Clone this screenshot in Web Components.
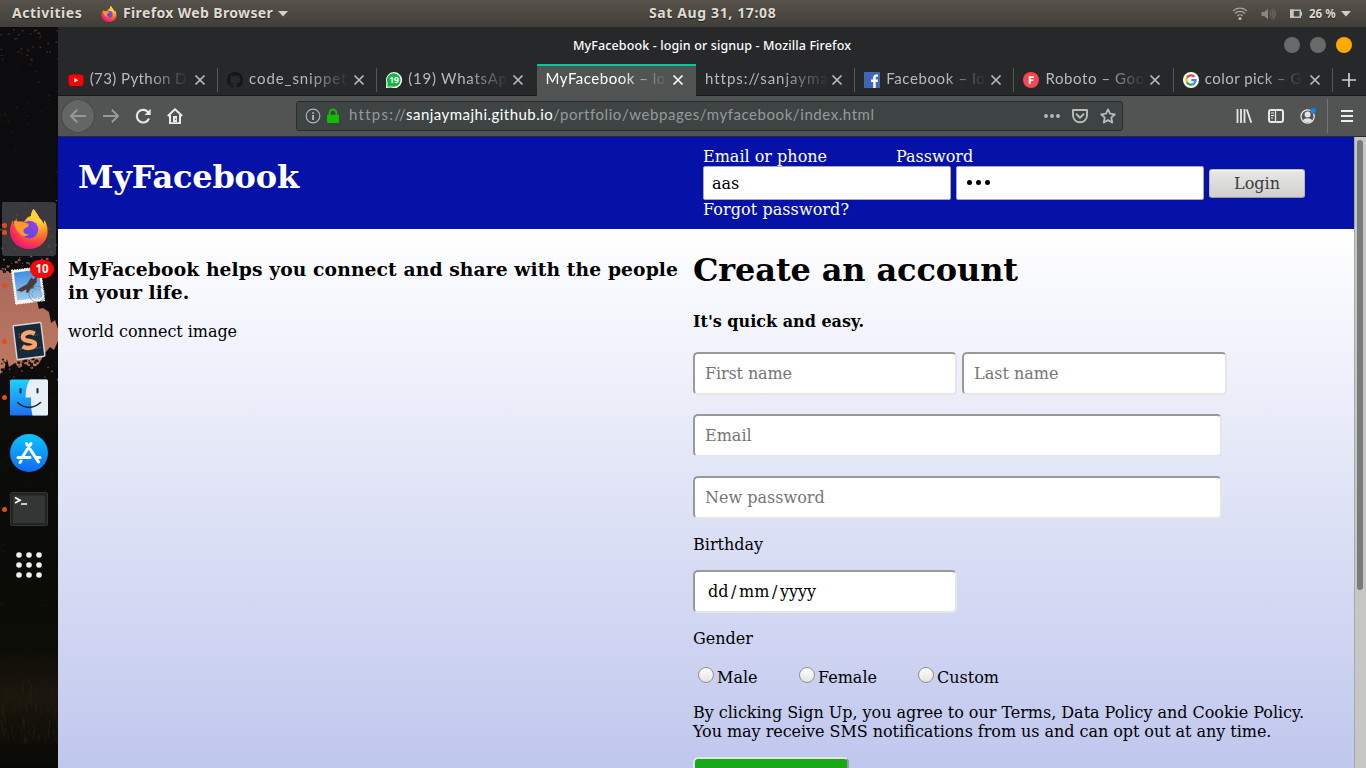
<!DOCTYPE html>
<html lang="en">
<head>
<meta charset="utf-8">
<title>MyFacebook - login or signup</title>
<style>
html,body{margin:0;height:100%;overflow:hidden;background:#000}
</style>
</head>
<body>
<desk-top></desk-top>
<script>
const define = (name, html, after) => customElements.define(name, class extends HTMLElement {
  connectedCallback() {
    if (this.shadowRoot) return;
    const root = this.attachShadow({ mode: 'open' });
    root.innerHTML = typeof html === 'function' ? html(this) : html;
    if (after) after(this, root);
  }
});

/* One line of text spaced out to a given width */
define('fit-text', '<style>:host{display:block;white-space:pre;flex:none}span{display:inline-block}</style><span><slot></slot></span>', (el, root) => {
  const w = parseFloat(el.getAttribute('w'));
  if (!w) return;
  const span = root.querySelector('span');
  el.style.width = w + 'px';
  const diff = w - span.getBoundingClientRect().width;
  if (Math.abs(diff) > 1) span.style.letterSpacing = diff / (el.textContent.length - .5) + 'px';
});

const fox = `<defs><radialGradient id="a" cx=".75" cy=".1" r="1"><stop offset="0" stop-color="#fff44f"/><stop offset=".35" stop-color="#ffb72c"/><stop offset=".6" stop-color="#ff6a2e"/><stop offset=".85" stop-color="#f9295c"/><stop offset="1" stop-color="#e0158e"/></radialGradient><linearGradient id="b" x1="1" y1="0" x2="0" y2="1"><stop offset="0" stop-color="#a03cf0"/><stop offset="1" stop-color="#4b4fd8"/></linearGradient></defs>
<path fill="url(#a)" d="M24.500 0C27 3 29 6 30.500 9C33 11 34 13 34.500 15L35.500 11C38 15 39 20 38.500 25C37 34 29 40 20 40C9 40 1 32 1 22C1 18 2 14 4 11L4.500 15L7.500 9L8 13C11 12 13 12 15 13C17 9 20 7 22 7C22 4 23 2 24.500 0Z"/>
<circle cx="20.500" cy="20.500" r="8.800" fill="url(#b)"/><path fill="#ff9a2a" d="M5 12C10 12 13 14 16 14C19 14 20 15 19.500 17C18 19 15 19 14.500 21C14 24 17 26 20 25C18 28 13 28 10 24C7 20 5 17 5 12Z"/><path fill="#ffd33d" d="M24.500 0C28 5 32 10 33 17C30 12 27 11 22 10C22 5 23 2 24.500 0Z"/>`;
const ICONS = {
  fox: ['0 0 40 40', fox],
  youtube: ['0 0 16 16', '<rect x=".5" y="2.500" width="15" height="11.500" rx="3" fill="#f00"/><path d="M6.200 5.900v4.600l4.200-2.300z" fill="#fff"/>'],
  github: ['0 0 16 16', '<path fill="#151617" d="M8 0C3.580 0 0 3.580 0 8c0 3.540 2.290 6.530 5.470 7.590.4.070.55-.17.55-.38 0-.19-.01-.82-.01-1.490-2.010.37-2.530-.49-2.690-.94-.09-.23-.48-.94-.82-1.130-.28-.15-.68-.52-.01-.53.63-.01 1.080.58 1.230.82.72 1.210 1.870.87 2.330.66.07-.52.28-.87.51-1.070-1.780-.2-3.640-.89-3.640-3.950 0-.87.31-1.590.82-2.150-.08-.2-.36-1.020.08-2.120 0 0 .67-.21 2.200.82a7.500 7.500 0 014 0c1.530-1.040 2.200-.82 2.200-.82.44 1.100.16 1.920.08 2.120.51.56.82 1.270.82 2.150 0 3.070-1.870 3.750-3.650 3.950.29.25.54.73.54 1.480 0 1.070-.01 1.930-.01 2.200 0 .21.15.46.55.38A8 8 0 0016 8c0-4.420-3.580-8-8-8z"/>'],
  whatsapp: ['0 0 16 16', '<path d="M0 16L.3 10A8 8 0 1 1 5 15.500z" fill="#fff"/><path d="M1.300 14.700L1.500 10.500A6.800 6.800 0 1 1 5.500 14.400z" fill="#12b83f"/><text x="8.100" y="11" font-family="Open Sans,sans-serif" font-size="8.500" font-weight="700" text-anchor="middle" fill="#fff">19</text>'],
  facebook: ['0 0 16 16', '<path fill="#4267b2" d="M0 0h16v16H0z"/><path fill="#fff" d="M9.200 16V9.900H7.100V7.500h2.100V5.700c0-2.100 1.300-3.200 3.100-3.200.9 0 1.600.1 1.800.1v2.200h-1.200c-1 0-1.200.5-1.200 1.200v1.500h2.300l-.3 2.400h-2V16z"/>'],
  fonts: ['0 0 16 16', '<circle cx="8" cy="8" r="8" fill="#f8484d"/><path fill="#fff" d="M5.800 4.200h5v1.700h-3v1.500h2.700V9H7.800v3h-2z"/>'],
  google: ['0 0 16 16', '<circle cx="8" cy="8" r="8" fill="#fff"/><g fill="none" stroke-width="2.300"><path stroke="#ea4335" d="M3.900 5.800A4.700 4.700 0 0 1 11.400 4.800"/><path stroke="#fbbc05" d="M3.900 5.800A4.700 4.700 0 0 0 3.900 10.300"/><path stroke="#34a853" d="M3.900 10.200A4.700 4.700 0 0 0 11 11.600"/><path stroke="#4285f4" d="M8.200 8.100H12.600A4.700 4.700 0 0 1 11 11.600"/></g>'],
  close: ['0 0 16 16', '<path d="M3.500 3.500l9 9m0-9l-9 9" stroke="currentColor" stroke-width="1.700" fill="none"/>'],
  plus: ['0 0 16 16', '<path d="M8 1v14M1 8h14" stroke="#cfcfcf" stroke-width="1.700"/>'],
  back: ['0 0 16 16', '<path d="M7.200 1.700L1 8l6.200 6.300M1 8h15" fill="none" stroke="#969998" stroke-width="2"/>'],
  forward: ['0 0 16 16', '<path d="M8.800 1.700L15 8l-6.200 6.300M15 8H0" fill="none" stroke="#969998" stroke-width="2"/>'],
  reload: ['0 0 16 16', '<path d="M13.500 4.800A6.300 6.300 0 1 0 14 10.500" fill="none" stroke="#e8e8e8" stroke-width="2.100"/><path d="M15.700 .8V7H9.500z" fill="#e8e8e8"/>'],
  home: ['0 0 16 16', '<path d="M.8 8L8 1.300 15.200 8" fill="none" stroke="#eaeaea" stroke-width="2" stroke-linejoin="round"/><path d="M3 7v8.200h10V7" fill="none" stroke="#eaeaea" stroke-width="2"/><path d="M6 8h4v6H6z" fill="#eaeaea"/><path d="M8.300 10.500h.8v1.500h-.8z" fill="#444"/>'],
  info: ['0 0 16 16', '<circle cx="8" cy="8" r="6.800" fill="none" stroke="#aeb2b1" stroke-width="1.200"/><path d="M7.200 7h1.800v5H7.200zM7.200 4.200h1.800v1.600H7.200z" fill="#b6b9b8"/>'],
  lock: ['0 0 16 16', '<path d="M4.600 8V5a3.400 3.400 0 0 1 6.800 0v3" fill="none" stroke="#12bc00" stroke-width="2"/><rect x="2" y="6.800" width="12" height="8.200" rx="1.200" fill="#12bc00"/>'],
  dots: ['0 0 16 16', '<g fill="#b9bcbb"><circle cx="2" cy="8" r="1.900"/><circle cx="8" cy="8" r="1.900"/><circle cx="14" cy="8" r="1.900"/></g>'],
  pocket: ['0 0 16 16', '<path d="M1 2h14v5.500a7 6.800 0 0 1-14 0z" fill="none" stroke="#b9bcbb" stroke-width="1.900" stroke-linejoin="round"/><path d="M4.500 6.300L8 9.600l3.500-3.300" fill="none" stroke="#b9bcbb" stroke-width="1.900" stroke-linecap="round"/>'],
  star: ['0 0 16 16', '<path d="M8 1.400l2 4.300 4.800.6-3.500 3.300.9 4.900L8 12.100l-4.200 2.400.9-4.900L1.200 6.300 6 5.700z" fill="none" stroke="#b9bcbb" stroke-width="1.800" stroke-linejoin="round"/>'],
  library: ['0 0 16 16', '<path d="M1.500 1v14M5 1v14M8.500 1v14M10.800 1.500l4.500 13.300" fill="none" stroke="#e8e8e8" stroke-width="1.800"/>'],
  sidebar: ['0 0 16 16', '<rect x="1" y="2" width="14" height="12" rx="2" fill="none" stroke="#e8e8e8" stroke-width="2"/><path d="M7.500 2v12" stroke="#e8e8e8" stroke-width="1.300"/><path d="M3 5h3M3 7.500h3M3 10h2" stroke="#e8e8e8" stroke-width="1.100"/>'],
  account: ['0 0 16 16', '<circle cx="7.600" cy="8.500" r="6.600" fill="none" stroke="#e3e3e3" stroke-width="1.300"/><circle cx="7.600" cy="6.500" r="3" fill="#e3e3e3"/><path d="M3 12.500c1-3 8-3 9.200 0-2 2.400-7 2.400-9.200 0z" fill="#e3e3e3"/><circle cx="13.200" cy="2.700" r="3" fill="#515453"/><circle cx="13.200" cy="2.700" r="2.600" fill="#1086ff"/>'],
  menu: ['0 0 16 16', '<path d="M2 3h12M2 8h12M2 13h12" stroke="#ededed" stroke-width="2"/>'],
  caret: ['0 0 10 6', '<path d="M0 0h10L5 5.500z" fill="#d2cfc9"/>'],
  wifi: ['0 0 16 16', '<g fill="none" stroke="#aaa69f" stroke-width="1.200"><path d="M1 5a10 10 0 0 1 14 0M3 7.500a7 7 0 0 1 10 0M5.200 10a4 4 0 0 1 5.600 0"/></g><circle cx="8" cy="12.400" r="1.500" fill="#c3c0ba"/>'],
  sound: ['0 0 16 16', '<path d="M1.500 6h2.700L8 2.700v10.600L4.200 10H1.500z" fill="#8a877f"/><path d="M9.800 5.400a3.500 3.500 0 0 1 0 5.200M11.300 3.700a6 6 0 0 1 0 8.600M12.700 2.200a8 8 0 0 1 0 11.600" stroke="#77746d" fill="none"/>'],
  battery: ['0 0 16 16', '<rect x="2.700" y="4.200" width="9.600" height="7" fill="none" stroke="#c9c6c0" stroke-width="1.400"/><path d="M2 3.500h3.700v8.400H2zM12.500 5.700h1.500v4h-1.500z" fill="#c9c6c0"/>'],
  mail: ['0 0 40 40', '<defs><linearGradient id="m" x2="0" y2="1"><stop stop-color="#3f8fe0"/><stop offset="1" stop-color="#9ccbf1"/></linearGradient></defs><g transform="rotate(-7 19 20)"><rect x="4.500" y="3.500" width="29" height="34" fill="#f4f4ef" stroke="#fff" stroke-width="1.200" stroke-dasharray="1.500 1"/><rect x="6.500" y="6" width="25" height="28" fill="url(#m)"/><path d="M7 24l6-3 5-2 5-6 2 2 4-3-1 6-4 4 1 2-4 0-3 4-2-1 1-3-5 2z" fill="#4b3c37"/></g><circle cx="28" cy="29" r="8" fill="none" stroke="#69747b" stroke-opacity=".6"/><circle cx="28" cy="29" r="5" fill="none" stroke="#69747b" stroke-opacity=".5" stroke-dasharray="3 1"/>'],
  sublime: ['0 0 40 40', '<g transform="rotate(-7 20 20)"><rect x="6" y="3" width="28" height="34" rx="1" fill="#18293a" stroke="#d8d8d6" stroke-width="1.400"/><path d="M10 12h5m2 0h8m-15 3h4m12 0h4M10 27h3m13 1h5" stroke="#426487" stroke-dasharray="2 1"/><path d="M26.500 13.500c-5-4-12-2-12 2.500 0 5 11 3 11 7.500 0 4-8 4.500-12.500 1" fill="none" stroke="#ffa466" stroke-width="4.500"/></g>'],
  finder: ['0 0 40 40', '<defs><linearGradient id="f" x2="0" y2="1"><stop stop-color="#20d0ff"/><stop offset="1" stop-color="#1a70ef"/></linearGradient></defs><rect x="1" y="2.500" width="38" height="36" rx="1.500" fill="url(#f)"/><path d="M21 2.500h16.500a1.500 1.500 0 0 1 1.500 1.500v33a1.500 1.500 0 0 1-1.500 1.500H23.500C22.500 34 22 29 22 20.500h-5.500C17 12 18 7 21 2.500z" fill="#e9eff6"/><path d="M11.500 12v3.500M28.500 12v3.500" stroke="#20272f" stroke-width="2" stroke-linecap="round"/><path d="M8.500 25.500c7 6.500 16 6.500 23 0" fill="none" stroke="#20272f" stroke-width="1.600" stroke-linecap="round"/>'],
  store: ['0 0 40 40', '<defs><linearGradient id="s" x2="0" y2="1"><stop stop-color="#08c8fd"/><stop offset="1" stop-color="#1268f5"/></linearGradient></defs><circle cx="20" cy="20" r="19" fill="url(#s)"/><g fill="none" stroke="#fff" stroke-width="3" stroke-linecap="round"><path d="M22 10.500L13.500 24M17.500 10.500L29.500 29M9 24.500h12M26.500 24.500H31M12 28l-1 1.500"/></g>'],
  terminal: ['0 0 40 40', '<rect x="1.500" y="3.500" width="37" height="33" rx="1" fill="#222424" stroke="#343636"/><path d="M4 6.500h32V34H4z" fill="#343535"/><path d="M6 8.500l5 2.700-5 2.700M12 15h6" fill="none" stroke="#fff" stroke-width="1.700"/>'],
  apps: ['0 0 40 40', '<g fill="#f1f1f1">' + [10,20,30].map(y => [10,20,30].map(x => `<circle cx="${x}" cy="${y}" r="2.800"/>`).join('')).join('') + '</g>']
};
define('ui-icon', el => {
  const [box, body] = ICONS[el.getAttribute('name')];
  const w = el.getAttribute('size') || 16, h = el.getAttribute('h') || w;
  return `<style>:host{display:block;flex:none;width:${w}px;height:${h}px}svg{display:block}</style><svg width="${w}" height="${h}" viewBox="${box}">${body}</svg>`;
});

define('top-bar', `<style>
:host{display:grid;grid-template-columns:1fr auto 1fr;height:27px;box-sizing:border-box;align-items:center;background:linear-gradient(#57534b,#403e38);color:#dfdbd2;font:700 14px/26px "Noto Sans","Open Sans",sans-serif;text-shadow:0 1px 1px #222}
div{display:flex;align-items:center}.l{padding-left:12px}.r{justify-content:flex-end;padding-right:15px}
fit-text{margin-top:-1px}.r fit-text{font-size:11.500px}
</style><div class="l"><fit-text w="70">Activities</fit-text><ui-icon name="fox" style="margin:0 6px 0 19px"></ui-icon><fit-text w="150">Firefox Web Browser</fit-text><ui-icon name="caret" size="10" h="6" style="margin-left:5px"></ui-icon></div>
<div style="padding-left:58px;margin-right:0"><fit-text w="127" style="margin-right:0">Sat Aug 31, 17:08</fit-text></div>
<div class="r"><ui-icon name="wifi"></ui-icon><ui-icon name="sound" style="margin-left:12px"></ui-icon><ui-icon name="battery" style="margin-left:12px"></ui-icon><fit-text w="27" style="margin:0 5px 0 5px">26 %</fit-text><ui-icon name="caret" size="10" h="6"></ui-icon></div>`, (el, root) => {
  root.host.style.gridTemplateColumns = '591px 185px 1fr';
});

define('dock-item', el => `<style>
:host{display:grid;place-items:center;position:relative;width:54px;height:54px;border-radius:3px;box-sizing:border-box}
:host([active]){background:rgba(70,70,73,.8)}
.d{position:absolute;left:0;top:0;height:100%;display:flex;flex-direction:column;justify-content:center;gap:2px}
i{width:5px;height:5px;border-radius:50%;background:#e34c1c}
</style><ui-icon name="${el.getAttribute('icon')}" size="40"></ui-icon><div class="d">${'<i></i>'.repeat(+el.getAttribute('dots') || 0)}</div><slot></slot>`);

/* Launcher over a sunset wallpaper seen between trees */
const rnd = (s => () => (s = (s * 16807) % 2147483647) / 2147483647)(77);
const blobs = (n, y0, y1, c, r) => Array.from({ length: n }, () => {
  const s = 1 + rnd() * r;
  return `<rect x="${(rnd() * 58).toFixed(1)}" y="${(y0 + rnd() * (y1 - y0)).toFixed(1)}" width="${s.toFixed(1)}" height="${(s * .8).toFixed(1)}" fill="${c}"/>`;
}).join('');
const wallpaper = `<defs><linearGradient id="w" x2="0" y2="1"><stop stop-color="#a8695b"/><stop offset="1" stop-color="#c07a63"/></linearGradient><linearGradient id="g" x2="0" y2="1"><stop stop-color="#0d0c0c"/><stop offset=".5" stop-color="#0b0b07"/><stop offset=".72" stop-color="#0d0d07"/><stop offset=".83" stop-color="#1c160e"/><stop offset=".92" stop-color="#0f0e07"/><stop offset="1" stop-color="#090907"/></linearGradient></defs>
<rect width="58" height="741" fill="#0c0b0d"/>${blobs(34, 2, 32, '#4d2e2c', .9)}${blobs(20, 60, 100, '#2b1e16', .8)}${blobs(16, 30, 160, '#1b2009', 1.500)}
${blobs(30, 172, 224, '#714c43', 1.600)}
<path d="M0 243l5-2 5 5 5-2 7 3 10-6 7 3 12-5 7 8v110H0z" fill="url(#w)"/>
${blobs(26, 236, 247, '#100c0d', 4)}${blobs(26, 228, 242, '#8b594d', 1.800)}
<path d="M58 228v74l-3-9-4 3-2-11-6-4-4 1-2-8-3-20 3-12z" fill="#100c0d"/>
<path d="M0 347l4-4 3-11 2 8 6-4 4 5 7-4 6 5 6-4 7-12 5-6 4 3 4-9v428H0z" fill="url(#g)"/>${blobs(44, 330, 348, '#18100f', 2.500)}${blobs(18, 334, 358, '#6d4940', 1.300)}
${blobs(60, 350, 640, '#131409', 2)}
${Array.from({ length: 80 }, () => { const x = rnd() * 58, y = 655 + rnd() * 65; return `<path d="M${x.toFixed(1)} ${y.toFixed(1)}v-${(3 + rnd() * 7).toFixed(1)}" stroke="${rnd() > .5 ? '#2b2012' : '#1d210d'}" opacity=".7"/>`; }).join('')}`;
define('app-dock', `<style>
:host{display:flex;flex-direction:column;position:relative;gap:2px;width:58px;height:741px;padding:175px 2px 0;box-sizing:border-box;overflow:hidden}
.bg{position:absolute;left:0;top:0}
b{position:absolute;left:28px;top:2px;width:24px;height:18px;border-radius:9px;background:#fb0507;color:#fff;font:700 11.500px/18px "Noto Sans",sans-serif;text-align:center}
</style><svg class="bg" width="58" height="741">${wallpaper}</svg>
<dock-item icon="fox" dots="2" active></dock-item><dock-item icon="mail" dots="1"><b>10</b></dock-item><dock-item icon="sublime" dots="1"></dock-item><dock-item icon="finder" dots="1"></dock-item><dock-item icon="store"></dock-item><dock-item icon="terminal" dots="1"></dock-item><dock-item icon="apps"></dock-item>`);

define('title-bar', `<style>
:host{display:grid;grid-template-columns:1fr auto 1fr;align-items:center;height:37px;background:#262829;color:#fff;font:500 12.500px/36px "Noto Sans",sans-serif}
div{display:flex;justify-content:flex-end;gap:10px;padding-right:14px;margin-top:-1px}i{width:16px;height:16px;border-radius:50%;background:#686a6a}i:last-child{background:#ffa900}
</style><span></span><fit-text w="278">MyFacebook - login or signup - Mozilla Firefox</fit-text><div><i></i><i></i><i></i></div>`);

define('browser-tab', el => `<style>
:host{display:flex;align-items:center;position:relative;flex:none;width:159.300px;height:32px;box-sizing:border-box;padding-left:9px;color:#b9bab9;border-bottom:1px solid #17191a;font:400 15px/20px Lato,sans-serif}
:host([sep])::after{content:"";position:absolute;right:0;top:4px;width:1px;height:24px;background:#555857}
:host([active]){background:#515453;color:#fff;border-top:2px solid #00c99b;border-bottom:0}
ui-icon[name=close]{position:absolute;left:133px;top:8px}:host([active]) ui-icon[name=close]{top:6px}
.t{margin-top:-4px;overflow:hidden;-webkit-mask-image:linear-gradient(90deg,#000 60%,transparent 102%);mask-image:linear-gradient(90deg,#000 60%,transparent 102%)}
:host([active]) .t{margin-top:-6px}.i{margin-right:6px}
</style>${el.hasAttribute('icon') ? `<ui-icon class="i" name="${el.getAttribute('icon')}"></ui-icon>` : ''}<div class="t"><fit-text w="${el.getAttribute('w')}">${el.getAttribute('label')}</fit-text></div><ui-icon name="close"></ui-icon>`);

define('tab-strip', `<style>:host{display:flex;height:32px;box-sizing:border-box;padding-left:.7px;background:#262829;box-shadow:inset 0 -1px #17191a}ui-icon{margin:8px 0 0 8px}</style>
<browser-tab icon="youtube" label="(73) Python D" w="97" sep></browser-tab><browser-tab icon="github" label="code_snippet" w="98" sep></browser-tab><browser-tab icon="whatsapp" label="(19) WhatsAp" w="99"></browser-tab><browser-tab label="MyFacebook – lo" w="120" active></browser-tab><browser-tab label="https://sanjayma" w="123" sep></browser-tab><browser-tab icon="facebook" label="Facebook – lo" w="99" sep></browser-tab><browser-tab icon="fonts" label="Roboto – Goo" w="99" sep></browser-tab><browser-tab icon="google" label="color pick – G" w="97" sep></browser-tab><ui-icon name="plus"></ui-icon>`);

define('nav-bar', `<style>
:host{display:flex;align-items:center;height:41px;box-sizing:border-box;padding-left:4px;background:#515453;border-bottom:1px solid #292c2b}
.b{width:32px;height:32px;border-radius:50%;display:grid;place-items:center;background:#646665;box-shadow:0 0 0 .5px #3b3d3c}
.u{display:flex;align-items:center;box-sizing:border-box;width:827px;height:30px;margin-left:113px;padding:0 6px 0 8px;border:1px solid #292c2c;border-radius:3px;background:#3e4443;color:#969a99;font:400 15px/20px Lato,sans-serif}
.u fit-text{margin-top:-5px}.w{color:#fff}hr{width:1px;height:34px;margin:0 11px 0 11px;border:0;background:#727473}
</style><div class="b"><ui-icon name="back"></ui-icon></div><ui-icon name="forward" style="margin-left:9px"></ui-icon><ui-icon name="reload" style="margin-left:16px"></ui-icon><ui-icon name="home" style="margin-left:16px"></ui-icon>
<div class="u"><ui-icon name="info" style="margin-right:4px"></ui-icon><ui-icon name="lock" style="margin-right:8px"></ui-icon><fit-text w="57">https://</fit-text><fit-text w="147" class="w">sanjaymajhi.github.io</fit-text><fit-text w="321">/portfolio/webpages/myfacebook/index.html</fit-text><ui-icon name="dots" style="margin-left:auto"></ui-icon><ui-icon name="pocket" style="margin-left:12px"></ui-icon><ui-icon name="star" style="margin-left:12px"></ui-icon></div>
<ui-icon name="library" style="margin-left:113px"></ui-icon><ui-icon name="sidebar" style="margin-left:16px"></ui-icon><ui-icon name="account" style="margin-left:16px"></ui-icon><hr><ui-icon name="menu"></ui-icon>`);

define('site-header', `<style>
:host{display:flex;box-sizing:border-box;height:92px;padding:10px 0 0 20px;background:#0511a7;color:#fff}
h1{margin:11px 0 0;width:625px;font-size:32px;line-height:38px}
.row{display:flex;align-items:center;gap:5px}.f{box-sizing:border-box;width:248px;height:34px;padding:0 8px;border:1px solid #a9a9b4;border-radius:2px;background:#fff;color:#000;display:flex;align-items:center}
.dots{gap:4px;padding-left:10px}.dots i{width:5px;height:5px;border-radius:50%;background:#000;margin-top:-1px}
button{width:96px;height:29px;margin-top:1px;box-sizing:border-box;display:grid;place-items:center;padding:0;border:1px solid #b8b8b8;border-bottom-color:#999;border-radius:3px;background:linear-gradient(#e8e8e7,#d0d0cf);box-shadow:inset 0 1px #fafafa;font:inherit;color:#3b3b3b}
</style><h1><fit-text w="221">MyFacebook</fit-text></h1><div><div class="row"><fit-text w="125" style="margin-right:63px">Email or phone</fit-text><fit-text w="78">Password</fit-text></div><div class="row"><div class="f"><fit-text w="28">aas</fit-text></div><div class="f dots"><i></i><i></i><i></i></div><button><fit-text w="46">Login</fit-text></button></div><fit-text w="146">Forgot password?</fit-text></div>`);

define('form-field', el => `<style>
:host{display:flex;align-items:center;box-sizing:border-box;height:43px;width:${el.getAttribute('width')}px;padding-left:10px;border:2px solid;border-color:#999 #e6e6e6 #e6e6e6 #999;border-radius:5px;background:#fff;color:#757575}
:host([filled]){color:#000;padding-left:13px}
</style><slot></slot>`);

define('radio-option', `<style>:host{display:flex;width:auto}i{box-sizing:border-box;width:16px;height:16px;margin:3px 3px 0 5px;border:1px solid #92928f;border-radius:50%;background:linear-gradient(#fff,#e3e3e2)}slot{display:block}div{padding-top:4px}</style><i></i><div><slot></slot></div>`);

define('sign-up', `<style>
:host{display:block;width:640px}h1,h4{margin:0}h1{font-size:32px;line-height:38px;padding-top:22px}h4{margin:23px 0 21px;font-size:16px}
.row{display:flex;gap:5px}form-field{margin-bottom:19px}.g{display:flex;height:23px;margin:16px 0}
.b{box-sizing:border-box;width:156px;height:43px;margin-top:16px;border:2px solid;border-color:#e2e2e4 #999 #999 #e2e2e4;border-radius:5px;background:#1ba818}
</style><h1><fit-text w="325">Create an account</fit-text></h1><h4><fit-text w="170">It's quick and easy.</fit-text></h4>
<div class="row"><form-field width="264"><fit-text w="87">First name</fit-text></form-field><form-field width="265"><fit-text w="84">Last name</fit-text></form-field></div>
<form-field width="529"><fit-text w="47">Email</fit-text></form-field><form-field width="529" style="margin-bottom:16px"><fit-text w="120">New password</fit-text></form-field>
<fit-text w="70">Birthday</fit-text><form-field width="264" filled style="margin:16px 0"><fit-text w="20">dd</fit-text><fit-text w="5" style="margin:0 3px">/</fit-text><fit-text w="30">mm</fit-text><fit-text w="5" style="margin:0 3px">/</fit-text><fit-text w="37">yyyy</fit-text></form-field>
<fit-text w="59">Gender</fit-text><div class="g"><radio-option style="width:101px"><fit-text w="40">Male</fit-text></radio-option><radio-option style="width:119px"><fit-text w="58">Female</fit-text></radio-option><radio-option><fit-text w="61">Custom</fit-text></radio-option></div>
<fit-text w="611">By clicking Sign Up, you agree to our Terms, Data Policy and Cookie Policy.</fit-text><fit-text w="578">You may receive SMS notifications from us and can opt out at any time.</fit-text><div class="b"></div>`);

define('web-page', `<style>
:host{display:grid;grid-template-columns:1296px 12px;height:631px;overflow:hidden;font:16px/19px "DejaVu Serif",serif;color:#000}
.p{height:631px;overflow:hidden;background:linear-gradient(#fff 92px,#c0c7ed 631px)}
main{display:flex;padding-left:10px}section{width:625px}h3{margin:29px 0 18px;font-size:18.720px;line-height:23px}
.s{box-sizing:border-box;background:#c6c6c5;border-left:1px solid #a9a9a8;padding:3px 3px 0 2px}.s i{display:block;height:450px;width:6px;border-radius:3px;background:#777c7b}
</style><div class="p"><site-header></site-header><main><section><h3><fit-text w="610">MyFacebook helps you connect and share with the people</fit-text><fit-text w="122">in your life.</fit-text></h3><fit-text w="169">world connect image</fit-text></section><sign-up></sign-up></main></div><div class="s"><i></i></div>`);

define('browser-window', '<style>:host{display:block;width:1308px;height:741px;overflow:hidden}</style><title-bar></title-bar><tab-strip></tab-strip><nav-bar></nav-bar><web-page></web-page>');
define('desk-top', '<style>:host{display:block;width:1366px;height:768px;overflow:hidden}div{display:flex}</style><top-bar></top-bar><div><app-dock></app-dock><browser-window></browser-window></div>');
</script>
</body>
</html>
